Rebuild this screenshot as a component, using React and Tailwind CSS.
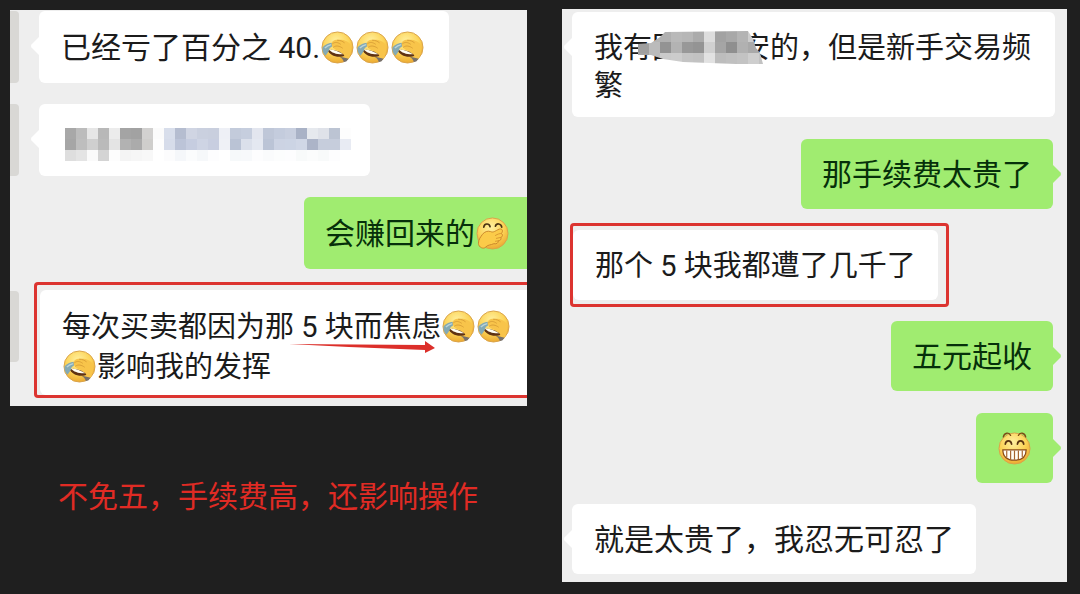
import { useId } from "react";
import clsx from "clsx";

const CARD_MASK = [
  ["#a8a8a8", "#bcbcbc", "#e6e6e6", "#b8b8b8", "#ececec", "#a4a4a4", "#a2a2a2", "#d2d1d0", "#fbfbfb", "#d8deeb", "#b5bdd0", "#d0d5e3", "#cad0df", "#c9cfde", "#eef0f6", "#c3cbdb", "#c6cede", "#e3e6ef", "#bfc7d8", "#c4ccdd", "#c8cfdf", "#a9b2c6", "#e6e9ee", "#dfe2e9", "#bcc4d3", "#fdfdfd"],
  ["#a6a6a6", "#bebebe", "#cfcfcf", "#bababa", "#e4e4e4", "#b2b2b2", "#ababab", "#cfcecc", "#fdfdfd", "#d6dcea", "#bcc4d8", "#c6cde0", "#ced4e4", "#c8cee0", "#eff1f6", "#bac3d5", "#dbe0eb", "#e4e8f1", "#bbc4d6", "#ccd3e3", "#ccd4e4", "#d0d7e6", "#acb4c8", "#c6cddc", "#c6cddc", "#e8ebf3"],
  ["#dedede", "#e4e4e4", "#fafafa", "#d4d4d4", "#fdfdfd", "#f4f4f4", "#f6f6f6", "#f8f8f8", "#ffffff", "#fcfcfd", "#f5f7fa", "#fbfcfd", "#f6f8fa", "#fdfdfe", "#ffffff", "#f6f9fa", "#f7f9fb", "#fdfdfe", "#fafbfc", "#fcfdfd", "#fdfdfe", "#f8fafa", "#fbfcfc", "#f8fafa", "#fdfdfe", "#ffffff"],
];

const NAME_MASK = [
  ["#b4b4b4", "#b4b4b4", "#b0b0b0", "#b9b9b9", "#b6b6b6", "#ababab", "#dddddd", "#a2a2a2", "#a8a8a8", "#b4b4b4", "#cdcdcd", "#cccccc"],
  ["#9f9f9f", "#bbbbbb", "#939393", "#b3b3b3", "#989898", "#949494", "#d0d0d0", "#a5a5a5", "#8f8f8f", "#b1b1b1", "#a9a9a9", "#b6b6b6"],
  ["#a4a4a4", "#bbbbbb", "#cacaca", "#cccccc", "#c4c4c4", "#c2c2c2", "#e2e2e2", "#bdbdbd", "#c0c0c0", "#c3c3c3", "#cecece", "#c2c2c2"],
];

function Face({ id }) {
  return (
    <>
      <defs>
        <radialGradient id={id} cx="0.45" cy="0.3" r="0.75">
          <stop offset="0" stopColor="#fff0a0" />
          <stop offset="0.55" stopColor="#fcd356" />
          <stop offset="1" stopColor="#e9a32c" />
        </radialGradient>
      </defs>
      <circle cx="17" cy="17" r="16" fill={`url(#${id})`} stroke="#d9a24a" strokeWidth="1" />
    </>
  );
}

function Emoji({ kind, label }) {
  const id = useId();
  return (
    <svg viewBox="0 0 34 34" role="img" aria-label={label} className="mx-px inline-block size-[33px] align-[-6px]">
      <Face id={id} />
      {kind === "facepalm" && (
        <>
          <path d="M7 20 C12 18 19 21 25 25 C21 27.500 15 27 11 24.500 C9 23 7.500 21.500 7 20Z" fill="#5f3213" />
          <path d="M8 19 C13 18.500 18 21 23 24 C17 24.500 11 22.500 8 19Z" fill="#fffdf2" />
          <path d="M1.500 17 C4 13.500 8 12 12.500 12 C13 14.500 11.500 16 9 17.500 C8.500 20 7 22.500 4.500 25.500 C2 23 1.200 20 1.500 17Z" fill="#83a9b4" />
          <path d="M4 17.500 C6 15.500 8 14.500 10.500 14" fill="none" stroke="#b9d3d9" strokeWidth="1.4" />
          <path d="M11 14 C10.500 10.500 14 8.500 18 9 C23 8.500 29 10.500 31 15 C31.500 21 30.500 26 27.500 30 L24 27.500 C25 24.500 22 22.500 18.500 20.500 C14.500 19.500 11.500 17.500 11 14Z" fill="#f8c44a" />
          <path d="M12 13 C14.500 11 17 11.500 20 13.500 M13 16.500 C16 14.500 19 15.500 22 17.500 M17 9.500 C20 9.500 22 10.500 24 12" fill="none" stroke="#d69c35" strokeWidth="0.900" strokeLinecap="round" />
          <path d="M19 26.500 C23 27 26 28 28.500 28.500 L26 31.500 L23.500 32 C23 29.500 21.500 28 19 26.500Z" fill="#77706a" />
        </>
      )}
      {kind === "chuckle" && (
        <>
          <path d="M8 10.500 C8.500 6.500 13.500 6 14.500 10 M20 9.500 C21 6 26 6.500 26.500 10.500" fill="none" stroke="#4a3312" strokeWidth="1.700" strokeLinecap="round" />
          <path d="M2.500 27 C2.500 23 5 20.500 6.500 18 C9 15 12 14 15 15 C18 16.500 20 14 24 12.500 C27 11.500 28.500 14.500 26 17 C28 18 27.500 20.500 25.500 21 C26.500 23 25 24.500 23 24.500 C23 27 21 28 18.500 27.500 C15 29 12 28.500 10 31 C8 33.500 2.500 31.500 2.500 27Z" fill="#fbcb49" stroke="#c9862a" strokeWidth="1" />
          <path d="M20 19 C22.500 17.500 24.500 17 26 17 M21 22 L25.500 21 M20 25 L23 24.500" fill="none" stroke="#d4932f" strokeWidth="0.900" strokeLinecap="round" />
        </>
      )}
      {kind === "grin" && (
        <>
          <path d="M5.500 5 C6.500 0.500 11.500 0 13 3.500 M21 3.500 C22.500 0 27.500 0.500 28.500 5" fill="none" stroke="#7d4b16" strokeWidth="1.400" strokeLinecap="round" />
          <path d="M7.500 12.500 C8 8 13.500 8 14 12.500 M20 12.500 C20.500 8 26 8 26.500 12.500" fill="none" stroke="#5a3310" strokeWidth="1.700" strokeLinecap="round" />
          <path d="M5 18.500 H29 C29 25 25 29 17 29 C9 29 5 25 5 18.500Z" fill="#fffdf5" stroke="#8a4b18" strokeWidth="1.300" />
          <path d="M9 19 V26 M13 19 V28 M17 19 V28.500 M21 19 V28 M25 19 V26" stroke="#a4612c" strokeWidth="1.200" />
        </>
      )}
    </svg>
  );
}

function Facepalm() {
  return <Emoji kind="facepalm" label="捂脸" />;
}

function Mosaic({ rows, className, clip }) {
  const id = useId();
  const width = rows[0].length * 11;
  return (
    <svg viewBox={`0 0 ${width} 33`} width={width} height="33" aria-hidden="true" shapeRendering="crispEdges" className={className}>
      {clip && (
        <clipPath id={id}>
          <path d={clip} />
        </clipPath>
      )}
      <g clipPath={clip ? `url(#${id})` : undefined}>
        {rows.map((row, y) =>
          row.map((fill, x) => <rect key={`${x}-${y}`} x={x * 11} y={y * 11} width="11" height="11" fill={fill} />)
        )}
      </g>
    </svg>
  );
}

function Tail({ mine }) {
  return (
    <svg
      viewBox="0 0 10 20"
      aria-hidden="true"
      className={clsx("absolute top-[25px] h-5 w-2.5", mine ? "-right-[9px] text-[#a0ec70]" : "-left-[9px] text-white")}
    >
      <path d={mine ? "M0 0 L8.500 8.500 Q9.500 10 8.500 11.500 L0 20Z" : "M10 0 L1.500 8.500 Q0.500 10 1.500 11.500 L10 20Z"} fill="currentColor" />
    </svg>
  );
}

function Bubble({ mine, tail = true, className, children }) {
  return (
    <div
      className={clsx(
        "relative rounded-md",
        mine ? "bg-[#a0ec70] px-[21px] text-[#06300a]" : "bg-white px-[22px] text-[#1b1b1b]",
        className
      )}
    >
      {tail && <Tail mine={mine} />}
      {children}
    </div>
  );
}

function Avatar() {
  return <div className="mr-5 h-[72px] w-[9px] shrink-0 rounded-r bg-[#d9d8d5]" />;
}

function LossChat() {
  return (
    <section className="flex flex-col gap-[21px] overflow-hidden bg-[#eeeeee] pt-px pb-2 text-[30px] leading-10">
      <div className="flex">
        <Avatar />
        <Bubble className="pt-[17px] pr-6 pb-[15px] whitespace-nowrap">
          已经亏了百分之 40.
          <Facepalm />
          <Facepalm />
          <Facepalm />
        </Bubble>
      </div>
      <div className="flex">
        <Avatar />
        <Bubble className="w-[331px] pt-6 pb-[15px]">
          <Mosaic rows={CARD_MASK} className="ml-1 max-w-none" />
        </Bubble>
      </div>
      <Bubble mine tail={false} className="self-end rounded-r-none pt-[17px] pr-[17px] pb-[15px] whitespace-nowrap">
        会赚回来的
        <Emoji kind="chuckle" label="偷笑" />
      </Bubble>
      <div className="-mt-2 flex items-start">
        <div className="mt-[9px] mr-[15px] h-[71px] w-[9px] shrink-0 rounded-r bg-[#d9d8d5]" />
        <div className="grow rounded-l-sm border-[3px] border-r-0 border-[#dc3430] pt-[5px] pl-[3px]">
          <Bubble tail={false} className="rounded-r-none pt-[17px] pr-0 pb-2 text-[29px] whitespace-nowrap">
            每次买卖都因为那 5 块而焦虑
            <Facepalm />
            <Facepalm />
            <br />
            <Facepalm />
            影响我的发挥
            <svg viewBox="0 0 146 14" aria-hidden="true" className="absolute top-[50px] left-[249px] h-3.5 w-[146px]">
              <path d="M0 4 L136 5 V1 L146 8 L136 13 V10 L60 7Z" fill="#dc2f2a" />
            </svg>
          </Bubble>
        </div>
      </div>
    </section>
  );
}

function FeeChat() {
  return (
    <section className="flex flex-col items-start gap-[22px] bg-[#eeeeee] pt-[3px] pr-3.5 pb-2 pl-2.5 text-[30px] leading-10">
      <Bubble className="-mr-0.5 self-stretch pt-[17px] pb-3 text-[29px] leading-[38px]">
        我有国<span className="inline-block w-[60px]" />
        <Mosaic
          rows={NAME_MASK}
          clip="M0 13 L13 12 L22 6 L27 1 L110 0 L115 8 L118 17 L122 22 L125 33 L98 33 L45 31 L25 28 L13 24 L0 24Z"
          className="absolute top-[19px] left-[66px]"
        />
        安的，但是新手交易频繁
      </Bubble>
      <Bubble mine className="self-end pt-4 pb-3.5">
        那手续费太贵了
      </Bubble>
      <div className="-my-2 -ml-0.5 rounded-sm border-[3px] border-[#dc3430] py-1 pr-2">
        <Bubble tail={false} className="pt-4 pb-3.5 text-[29px]">
          那个 5 块我都遭了几千了
        </Bubble>
      </div>
      <Bubble mine className="self-end pt-4 pb-3.5">
        五元起收
      </Bubble>
      <Bubble mine className="self-end pt-4 pb-3.5">
        <Emoji kind="grin" label="呲牙" />
      </Bubble>
      <Bubble className="-mt-px pt-4 pb-3.5">就是太贵了，我忍无可忍了</Bubble>
    </section>
  );
}

function App() {
  return (
    <main className="flex min-h-screen items-start gap-[35px] bg-[#1f1f1f] pt-[9px] pr-[13px] pb-3 pl-2.5 font-['Roboto','Noto_Sans_CJK_SC',sans-serif]">
      <div className="min-w-0 flex-[517_1_0%] pt-px">
        <LossChat />
        <p className="mt-[71px] pl-12 text-[30px] leading-10 text-[#e02b24]">不免五，手续费高，还影响操作</p>
      </div>
      <div className="min-w-0 flex-[505_1_0%]">
        <FeeChat />
      </div>
    </main>
  );
}

export default App;
